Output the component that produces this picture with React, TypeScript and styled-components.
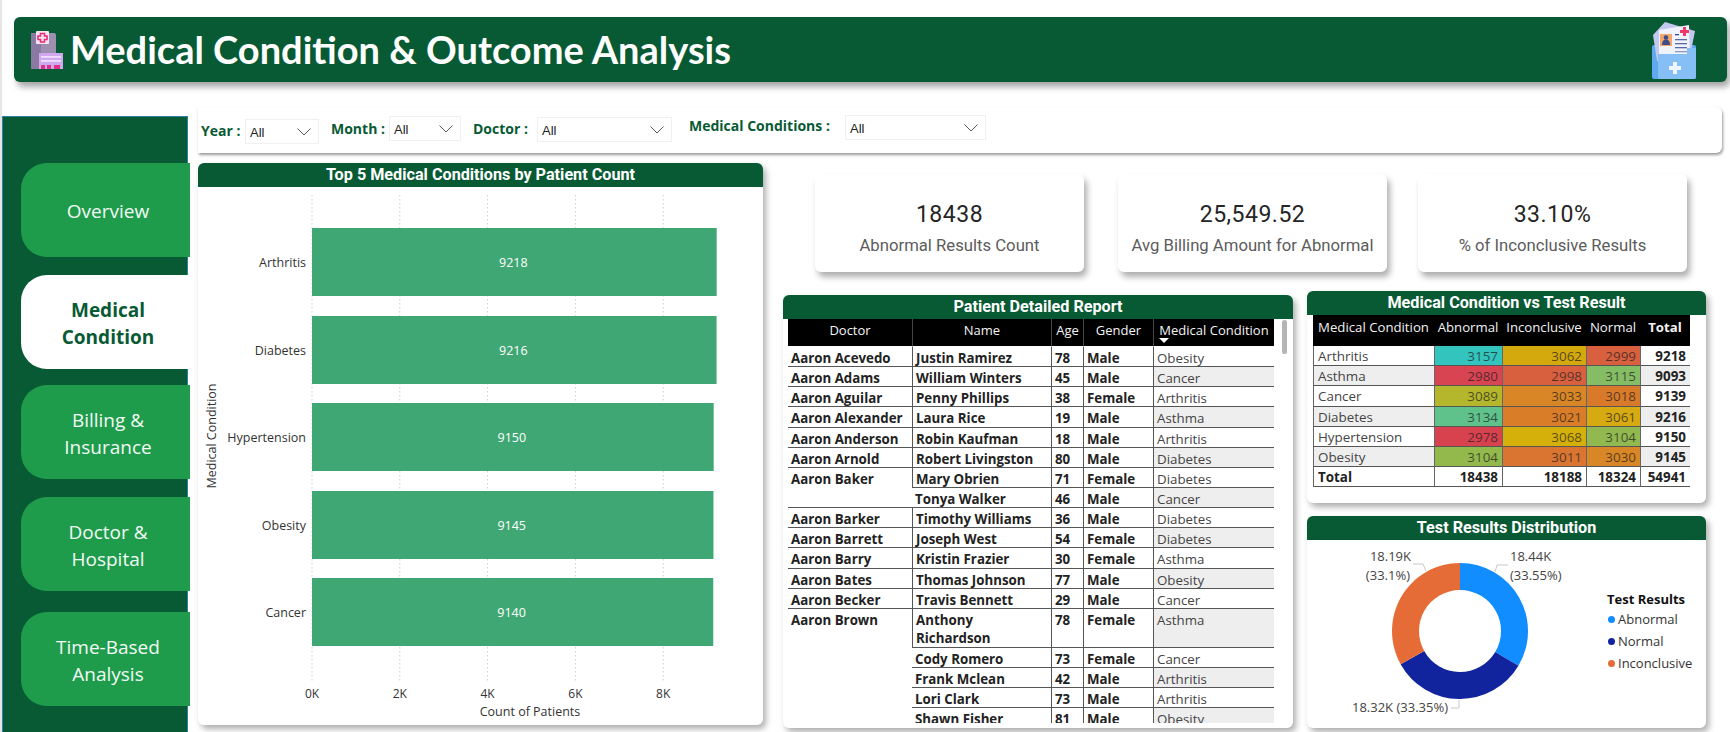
import React from 'react';
import styled, { createGlobalStyle } from 'styled-components';

const GREEN = '#085a34';
const SEGOE = '"Open Sans", "Noto Sans", sans-serif';
const DIN = 'Roboto, "Liberation Sans", sans-serif';

const Global = createGlobalStyle`
  html, body { margin: 0; padding: 0; background: #fff; }
`;

const Page = styled.div`
  width: 1730px;
  height: 732px;
  overflow: hidden;
  box-sizing: border-box;
  padding-top: 17px;
  background: #fff;
  font-family: ${SEGOE};
  color: #222;
  box-shadow: inset 2px 0 0 #e6e6e6;
`;

const Banner = styled.header`
  height: 65px;
  margin: 0 3px 0 14px;
  padding: 0 30px 0 16px;
  display: flex;
  align-items: center;
  background: ${GREEN};
  border-radius: 6px;
  box-shadow: 3px 5px 6px rgba(0, 0, 0, 0.35);
`;

const BannerTitle = styled.h1`
  flex: 1;
  margin: 0 0 2px 6px;
  font-family: Lato, sans-serif;
  font-size: 38px;
  font-weight: 700;
  color: #fff;
  white-space: nowrap;
`;

const Body = styled.div`
  display: flex;
  height: 625px;
  margin-top: 25px;
  padding-left: 2px;
`;

const Sidebar = styled.nav`
  width: 186px;
  height: 616px;
  margin-top: 9px;
  padding: 46px 0 0 18px;
  box-sizing: border-box;
  flex-shrink: 0;
  display: flex;
  flex-direction: column;
  background: ${GREEN};
  border-left: 1px solid #2f7fa8;
  border-right: 1px solid #2f7fa8;
  border-top: 1px solid #2f7fa8;
`;

const NavButton = styled.div<{ $active?: boolean; $gap: number }>`
  width: 169px;
  height: 94px;
  margin-top: ${(p) => p.$gap}px;
  padding: 3px 0 0 5px;
  box-sizing: border-box;
  flex-shrink: 0;
  display: flex;
  align-items: center;
  justify-content: center;
  text-align: center;
  border-radius: 26px 0 0 26px;
  font-size: 19px;
  line-height: 27px;
  font-weight: ${(p) => (p.$active ? 700 : 400)};
  color: ${(p) => (p.$active ? GREEN : '#f2fbf5')};
  background: ${(p) => (p.$active ? '#fff' : '#1f9b4c')};
  position: relative;
  z-index: 1;
`;

const Main = styled.main`
  width: 1524px;
  margin-left: 10px;
  display: flex;
  flex-direction: column;
`;

const FilterBar = styled.div`
  height: 46px;
  flex-shrink: 0;
  display: flex;
  align-items: flex-start;
  padding-left: 3px;
  box-sizing: border-box;
  background: #fff;
  border-radius: 0 6px 6px 0;
  box-shadow: 1px 2px 3px rgba(0, 0, 0, 0.4);
`;

const FilterLabel = styled.span<{ $w: number; $top: number }>`
  width: ${(p) => p.$w}px;
  margin-top: ${(p) => p.$top}px;
  flex-shrink: 0;
  font-size: 14px;
  line-height: 18px;
  font-weight: 700;
  color: ${GREEN};
  white-space: nowrap;
`;

const Select = styled.div<{ $w: number; $top: number; $after: number }>`
  width: ${(p) => p.$w}px;
  height: 25px;
  margin-top: ${(p) => p.$top}px;
  margin-right: ${(p) => p.$after}px;
  padding: 0 7px 0 4px;
  box-sizing: border-box;
  flex-shrink: 0;
  display: flex;
  align-items: center;
  justify-content: space-between;
  border: 1px solid #f0f0f0;
  font-family: "Liberation Sans", sans-serif;
  font-size: 13px;
  color: #222;

  span { padding-top: 2px; }
`;

const Lower = styled.div`
  display: flex;
  margin-top: 10px;
`;

const Card = styled.section<{ $w: number; $h: number }>`
  width: ${(p) => p.$w}px;
  height: ${(p) => p.$h}px;
  flex-shrink: 0;
  background: #fff;
  border-radius: 6px;
  box-shadow: 3px 4px 6px rgba(0, 0, 0, 0.32);
  overflow: hidden;
`;

const CardTitle = styled.h2`
  height: 24px;
  margin: 0;
  background: ${GREEN};
  color: #fff;
  font-family: ${DIN};
  font-size: 16.2px;
  font-weight: 700;
  line-height: 24px;
  text-align: center;
  white-space: nowrap;
`;

const RightColumn = styled.div`
  margin-left: 20px;
  display: flex;
  flex-direction: column;
`;

const KpiRow = styled.div`
  display: flex;
  gap: 34px;
  margin: 11px 0 0 32px;
`;

const Kpi = styled.div`
  width: 269px;
  height: 98px;
  display: flex;
  flex-direction: column;
  align-items: center;
  padding-top: 27px;
  box-sizing: border-box;
  background: #fff;
  border-radius: 6px;
  box-shadow: 3px 5px 6px rgba(0, 0, 0, 0.32);
  font-family: ${DIN};

  &:last-child { margin-left: -3px; }
`;

const KpiValue = styled.div`
  font-size: 23px;
  line-height: 27px;
  color: #252525;
  letter-spacing: 0.5px;
`;

const KpiLabel = styled.div`
  margin-top: 8px;
  font-size: 16.7px;
  line-height: 20px;
  color: #5c5c5c;
  white-space: nowrap;
`;

const TablesRow = styled.div`
  display: flex;
  align-items: flex-start;
  gap: 14px;
  margin-top: 19px;
`;

const PatientCard = styled(Card)`
  margin-top: 4px;
`;

const Stack = styled.div`
  display: flex;
  flex-direction: column;
  gap: 13px;
`;

const TableWrap = styled.div`
  height: 404px;
  margin-left: 5px;
  display: flex;
  overflow: hidden;
`;

const Scrollbar = styled.div`
  width: 5px;
  height: 34px;
  margin: 1px 0 0 8px;
  border-radius: 3px;
  background: #b4b4b4;
`;

const Table = styled.table`
  width: 486px;
  height: 0;
  flex-shrink: 0;
  table-layout: fixed;
  border-collapse: separate;
  border-spacing: 0;
  font-size: 13.3px;
  line-height: 15px;
`;

const Th = styled.th<{ $w: number }>`
  width: ${(p) => p.$w}px;
  height: 28px;
  padding: 3px 2px 0;
  box-sizing: border-box;
  vertical-align: top;
  background: #000;
  color: #f4f4f4;
  font-size: 13px;
  font-weight: 400;
  line-height: 17px;
  border-left: 1px solid #444;
  border-bottom: 1px solid #fff;
  white-space: nowrap;

  &:first-child { border-left: 0; }
`;

const SortMark = styled.div`
  width: 0;
  height: 0;
  margin: -1px 0 0 3px;
  border-left: 5px solid transparent;
  border-right: 5px solid transparent;
  border-top: 5px solid #fff;
`;

const Td = styled.td<{ $bold?: boolean; $shade?: boolean; $tall?: boolean }>`
  padding: ${(p) => (p.$tall ? 2 : 4)}px 3px 0;
  box-sizing: border-box;
  height: ${(p) => (p.$tall ? 39 : 20.15)}px;
  line-height: ${(p) => (p.$tall ? 18 : 15)}px;
  vertical-align: top;
  font-weight: ${(p) => (p.$bold ? 700 : 400)};
  color: ${(p) => (p.$bold ? '#222' : '#444')};
  background: ${(p) => (p.$shade ? '#eeeeee' : '#fff')};
  border-bottom: 1px solid #555;
  border-left: 1px solid #555;

  &:first-child { border-left: 0; }
`;

const Matrix = styled.table`
  width: 377px;
  margin-left: 6px;
  table-layout: fixed;
  border-collapse: separate;
  border-spacing: 0;
  font-size: 13.4px;
`;

const MatrixHead = styled.th<{ $w: number; $bold?: boolean }>`
  width: ${(p) => p.$w}px;
  height: 31px;
  padding: 3px 0 0;
  box-sizing: border-box;
  vertical-align: top;
  background: #000;
  color: #f2f2f2;
  font-size: 13.2px;
  line-height: 18px;
  font-weight: ${(p) => (p.$bold ? 700 : 400)};
  text-align: center;
  white-space: nowrap;
`;

const MatrixCell = styled.td<{ $bg?: string; $bold?: boolean; $left?: boolean }>`
  height: 20.2px;
  padding: 1px 4px 0;
  box-sizing: border-box;
  background: ${(p) => p.$bg ?? '#fff'};
  color: ${(p) => (p.$bold ? '#222' : p.$bg && !p.$left ? 'rgba(30, 30, 30, 0.72)' : '#444')};
  font-weight: ${(p) => (p.$bold ? 700 : 400)};
  text-align: ${(p) => (p.$left ? 'left' : 'right')};
  line-height: 18px;
  border-bottom: 1px solid #555;
  border-left: 1px solid #666;
  white-space: nowrap;
`;

const DonutBody = styled.div`
  display: flex;
`;

const Legend = styled.div`
  margin: 50px 0 0 0;
  display: flex;
  flex-direction: column;
  font-size: 13px;
`;

const LegendTitle = styled.div`
  font-weight: 700;
  color: #111;
  line-height: 18px;
`;

const LegendItem = styled.div`
  height: 22px;
  display: flex;
  align-items: center;
  gap: 3px;
  color: #333;
`;

const Dot = styled.span<{ $color: string }>`
  width: 7px;
  height: 7px;
  margin-left: 1px;
  border-radius: 50%;
  background: ${(p) => p.$color};
`;

const HospitalIcon = () => (
  <svg width="34" height="38" viewBox="0 0 34 38">
    <rect x="1" y="2" width="25" height="36" rx="2" fill="#9c8fb0" />
    <rect x="1" y="2" width="10" height="36" fill="#8a7aa3" />
    <rect x="6" y="0" width="13" height="13" rx="1" fill="#f6e6ee" />
    <path d="M10.5 2.5h4v2.500h2.500v3.500h-2.500v2.500h-4v-2.500h-2.500v-3.500h2.500z" fill="none" stroke="#ea2a7c" strokeWidth="1.600" />
    <rect x="9" y="22" width="24" height="16" fill="#cfa8ee" />
    <rect x="11" y="25" width="20" height="1.800" fill="#efdcff" />
    <rect x="11" y="29" width="20" height="1.800" fill="#efdcff" />
    <rect x="11" y="34" width="4" height="4" fill="#e0308a" />
    <rect x="17" y="34" width="4" height="4" fill="#e0308a" />
    <rect x="24" y="34" width="6" height="4" fill="#e0308a" />
  </svg>
);

const FolderIcon = () => (
  <svg width="46" height="58" viewBox="0 0 46 58">
    <rect x="1" y="24" width="44" height="34" rx="2" fill="#5fa9ee" />
    <path d="M2 14 L14 1 L44 10 L38 40 L6 40 Z" fill="#c3c8ee" />
    <path d="M8 9 L38 4 L39 40 L8 40 Z" fill="#f1f3fc" />
    <rect x="9" y="13" width="12" height="12" fill="#f3a76c" />
    <circle cx="15" cy="16.500" r="2.300" fill="#3c4c8c" />
    <path d="M11 24 q0 -5.500 4 -5.500 q4 0 4 5.500z" fill="#3c4c8c" />
    <rect x="24" y="13" width="4" height="1.300" fill="#3c4c8c" />
    <rect x="24" y="18" width="12" height="1.300" fill="#5b6aa5" />
    <rect x="24" y="22" width="12" height="1.300" fill="#5b6aa5" />
    <rect x="24" y="26" width="12" height="1.300" fill="#5b6aa5" />
    <rect x="24" y="30" width="12" height="1.300" fill="#8d98c6" />
    <path d="M29 9h3v-3h3v3h3v3h-3v3h-3v-3h-3z" fill="#f0386b" />
    <path d="M7 33 H36 V27 H45 V56 a2 2 0 0 1 -2 2 H9 a2 2 0 0 1 -2 -2 z" fill="#86bff5" />
    <path d="M22 41h4v4h4v4h-4v4h-4v-4h-4v-4h4z" fill="#eef5fd" />
  </svg>
);

const Chevron = () => (
  <svg width="14" height="8" viewBox="0 0 14 8">
    <polyline points="0.5,0.5 7,7 13.5,0.5" fill="none" stroke="#444" strokeWidth="0.9" />
  </svg>
);

const BARS = [
  { name: 'Arthritis', value: 9218, y: 41 },
  { name: 'Diabetes', value: 9216, y: 129 },
  { name: 'Hypertension', value: 9150, y: 216 },
  { name: 'Obesity', value: 9145, y: 304 },
  { name: 'Cancer', value: 9140, y: 391 },
];

const BarChart = () => {
  const originX = 114;
  const perK = 43.9;
  return (
    <svg width="565" height="538" viewBox="0 0 565 538" fontFamily={SEGOE} fontSize="12" fill="#333">
      {[0, 2, 4, 6, 8].map((k) => (
        <React.Fragment key={k}>
          <line
            x1={originX + k * perK}
            x2={originX + k * perK}
            y1="8"
            y2="496"
            stroke="#cfcfcf"
            strokeDasharray="1.500 2.500"
          />
          <text x={originX + k * perK} y="511" textAnchor="middle">{k}K</text>
        </React.Fragment>
      ))}
      {BARS.map((b) => (
        <React.Fragment key={b.name}>
          <rect x={originX} y={b.y} width={(b.value / 1000) * perK} height="68" fill="#3fa774" />
          <text x="108" y={b.y + 39} textAnchor="end" fontSize="12.500">{b.name}</text>
          <text x={originX + (b.value / 2000) * perK - 1} y={b.y + 39} textAnchor="middle" fontSize="12.500" fill="#fff">{b.value}</text>
        </React.Fragment>
      ))}
      <text transform="translate(18 249) rotate(-90)" textAnchor="middle" fontSize="12.500">Medical Condition</text>
      <text x="332" y="529" textAnchor="middle" fontSize="12.500">Count of Patients</text>
    </svg>
  );
};

function arcPath(cx: number, cy: number, r: number, ri: number, from: number, to: number) {
  const pt = (rad: number, f: number) => {
    const a = f * Math.PI * 2 - Math.PI / 2;
    return `${cx + rad * Math.cos(a)} ${cy + rad * Math.sin(a)}`;
  };
  const large = to - from > 0.5 ? 1 : 0;
  return `M${pt(r, from)} A${r} ${r} 0 ${large} 1 ${pt(r, to)} L${pt(ri, to)} A${ri} ${ri} 0 ${large} 0 ${pt(ri, from)} Z`;
}

const Donut = () => (
  <svg width="300" height="188" viewBox="0 0 300 188" fontFamily={SEGOE} fontSize="13" fill="#444">
    <path d={arcPath(153, 91, 68, 41, 0, 0.3355)} fill="#118dff" />
    <path d={arcPath(153, 91, 68, 41, 0.3355, 0.669)} fill="#12239e" />
    <path d={arcPath(153, 91, 68, 41, 0.669, 1)} fill="#e66c37" />
    <polyline points="188,32 190,25 201,25" fill="none" stroke="#c8c8c8" />
    <polyline points="106,24 116,24 119,31" fill="none" stroke="#c8c8c8" />
    <polyline points="152,160 152,168 144,168" fill="none" stroke="#c8c8c8" />
    <text x="203" y="21">18.44K</text>
    <text x="203" y="40">(33.55%)</text>
    <text x="104" y="21" textAnchor="end">18.19K</text>
    <text x="103" y="40" textAnchor="end">(33.1%)</text>
    <text x="141" y="172" textAnchor="end">18.32K (33.35%)</text>
  </svg>
);

const PATIENTS = [
  ['Aaron Acevedo', 'Justin Ramirez', '78', 'Male', 'Obesity', 1],
  ['Aaron Adams', 'William Winters', '45', 'Male', 'Cancer', 1],
  ['Aaron Aguilar', 'Penny Phillips', '38', 'Female', 'Arthritis', 1],
  ['Aaron Alexander', 'Laura Rice', '19', 'Male', 'Asthma', 1],
  ['Aaron Anderson', 'Robin Kaufman', '18', 'Male', 'Arthritis', 1],
  ['Aaron Arnold', 'Robert Livingston', '80', 'Male', 'Diabetes', 1],
  ['Aaron Baker', 'Mary Obrien', '71', 'Female', 'Diabetes', 2],
  ['', 'Tonya Walker', '46', 'Male', 'Cancer', 0],
  ['Aaron Barker', 'Timothy Williams', '36', 'Male', 'Diabetes', 1],
  ['Aaron Barrett', 'Joseph West', '54', 'Female', 'Diabetes', 1],
  ['Aaron Barry', 'Kristin Frazier', '30', 'Female', 'Asthma', 1],
  ['Aaron Bates', 'Thomas Johnson', '77', 'Male', 'Obesity', 1],
  ['Aaron Becker', 'Travis Bennett', '29', 'Male', 'Cancer', 1],
  ['Aaron Brown', 'Anthony Richardson', '78', 'Female', 'Asthma', 6],
  ['', 'Cody Romero', '73', 'Female', 'Cancer', 0],
  ['', 'Frank Mclean', '42', 'Male', 'Arthritis', 0],
  ['', 'Lori Clark', '73', 'Male', 'Arthritis', 0],
  ['', 'Shawn Fisher', '81', 'Male', 'Obesity', 0],
] as const;

const HEAT = [
  { name: 'Arthritis', cells: [[3157, '#33c4bd'], [3062, '#d4a90e'], [2999, '#d9603f']], total: 9218 },
  { name: 'Asthma', cells: [[2980, '#d84452'], [2998, '#d9603f'], [3115, '#84bd63']], total: 9093 },
  { name: 'Cancer', cells: [[3089, '#b4b62c'], [3033, '#d98626'], [3018, '#d97a2a']], total: 9139 },
  { name: 'Diabetes', cells: [[3134, '#5fc28a'], [3021, '#d97d28'], [3061, '#d6aa10']], total: 9216 },
  { name: 'Hypertension', cells: [[2978, '#d8424f'], [3068, '#d6b00a'], [3104, '#92b94f']], total: 9150 },
  { name: 'Obesity', cells: [[3104, '#93b94d'], [3011, '#da7431'], [3030, '#d98626']], total: 9145 },
];

const NAV = [
  { label: ['Overview'], gap: 0 },
  { label: ['Medical', 'Condition'], gap: 18, active: true },
  { label: ['Billing &', 'Insurance'], gap: 16 },
  { label: ['Doctor &', 'Hospital'], gap: 18 },
  { label: ['Time-Based', 'Analysis'], gap: 21 },
];

export default function App() {
  return (
    <Page>
      <Global />
      <Banner>
        <HospitalIcon />
        <BannerTitle>Medical Condition &amp; Outcome Analysis</BannerTitle>
        <FolderIcon />
      </Banner>
      <Body>
        <Sidebar>
          {NAV.map((n) => (
            <NavButton key={n.label[0]} $gap={n.gap} $active={n.active}>
              <div>
                {n.label.map((l) => (
                  <div key={l}>{l}</div>
                ))}
              </div>
            </NavButton>
          ))}
        </Sidebar>
        <Main>
          <FilterBar>
            <FilterLabel $w={44} $top={15}>Year :</FilterLabel>
            <Select $w={74} $top={12} $after={12}><span>All</span><Chevron /></Select>
            <FilterLabel $w={58} $top={13}>Month :</FilterLabel>
            <Select $w={72} $top={9} $after={12}><span>All</span><Chevron /></Select>
            <FilterLabel $w={64} $top={13}>Doctor :</FilterLabel>
            <Select $w={135} $top={10} $after={17}><span>All</span><Chevron /></Select>
            <FilterLabel $w={156} $top={10}>Medical Conditions :</FilterLabel>
            <Select $w={141} $top={8} $after={0}><span>All</span><Chevron /></Select>
          </FilterBar>
          <Lower>
            <Card $w={565} $h={562}>
              <CardTitle>Top 5 Medical Conditions by Patient Count</CardTitle>
              <BarChart />
            </Card>
            <RightColumn>
              <KpiRow>
                <Kpi><KpiValue>18438</KpiValue><KpiLabel>Abnormal Results Count</KpiLabel></Kpi>
                <Kpi><KpiValue>25,549.52</KpiValue><KpiLabel>Avg Billing Amount for Abnormal</KpiLabel></Kpi>
                <Kpi><KpiValue>33.10%</KpiValue><KpiLabel>% of Inconclusive Results</KpiLabel></Kpi>
              </KpiRow>
              <TablesRow>
                <PatientCard $w={510} $h={433}>
                  <CardTitle>Patient Detailed Report</CardTitle>
                  <TableWrap>
                    <Table>
                      <thead>
                        <tr>
                          <Th $w={124}>Doctor</Th>
                          <Th $w={139}>Name</Th>
                          <Th $w={32}>Age</Th>
                          <Th $w={70}>Gender</Th>
                          <Th $w={121}>
                            Medical Condition
                            <SortMark />
                          </Th>
                        </tr>
                      </thead>
                      <tbody>
                        {PATIENTS.map((p, i) => (
                          <tr key={p[1]}>
                            {p[5] > 0 && <Td $bold rowSpan={p[5]}>{p[0]}</Td>}
                            <Td $bold $tall={i === 13}>{p[1]}</Td>
                            <Td $bold>{p[2]}</Td>
                            <Td $bold>{p[3]}</Td>
                            <Td $shade={[1, 3, 5, 7, 9, 11, 13, 15, 17].includes(i)}>{p[4]}</Td>
                          </tr>
                        ))}
                      </tbody>
                    </Table>
                    <Scrollbar />
                  </TableWrap>
                </PatientCard>
                <Stack>
                  <Card $w={399} $h={212}>
                    <CardTitle>Medical Condition vs Test Result</CardTitle>
                    <Matrix>
                      <thead>
                        <tr>
                          <MatrixHead $w={121}>Medical Condition</MatrixHead>
                          <MatrixHead $w={68}>Abnormal</MatrixHead>
                          <MatrixHead $w={84}>Inconclusive</MatrixHead>
                          <MatrixHead $w={54}>Normal</MatrixHead>
                          <MatrixHead $w={50} $bold>Total</MatrixHead>
                        </tr>
                      </thead>
                      <tbody>
                        {HEAT.map((row, i) => (
                          <tr key={row.name}>
                            <MatrixCell $left $bg={i % 2 ? '#eeeeee' : '#fff'}>{row.name}</MatrixCell>
                            {row.cells.map(([v, c]) => (
                              <MatrixCell key={String(v) + c} $bg={String(c)}>{v}</MatrixCell>
                            ))}
                            <MatrixCell $bold $bg={i % 2 ? '#eeeeee' : '#fff'}>{row.total}</MatrixCell>
                          </tr>
                        ))}
                        <tr>
                          <MatrixCell $left $bold>Total</MatrixCell>
                          <MatrixCell $bold>18438</MatrixCell>
                          <MatrixCell $bold>18188</MatrixCell>
                          <MatrixCell $bold>18324</MatrixCell>
                          <MatrixCell $bold>54941</MatrixCell>
                        </tr>
                      </tbody>
                    </Matrix>
                  </Card>
                  <Card $w={399} $h={212}>
                    <CardTitle>Test Results Distribution</CardTitle>
                    <DonutBody>
                      <Donut />
                      <Legend>
                        <LegendTitle>Test Results</LegendTitle>
                        <LegendItem><Dot $color="#118dff" />Abnormal</LegendItem>
                        <LegendItem><Dot $color="#12239e" />Normal</LegendItem>
                        <LegendItem><Dot $color="#e66c37" />Inconclusive</LegendItem>
                      </Legend>
                    </DonutBody>
                  </Card>
                </Stack>
              </TablesRow>
            </RightColumn>
          </Lower>
        </Main>
      </Body>
    </Page>
  );
}
